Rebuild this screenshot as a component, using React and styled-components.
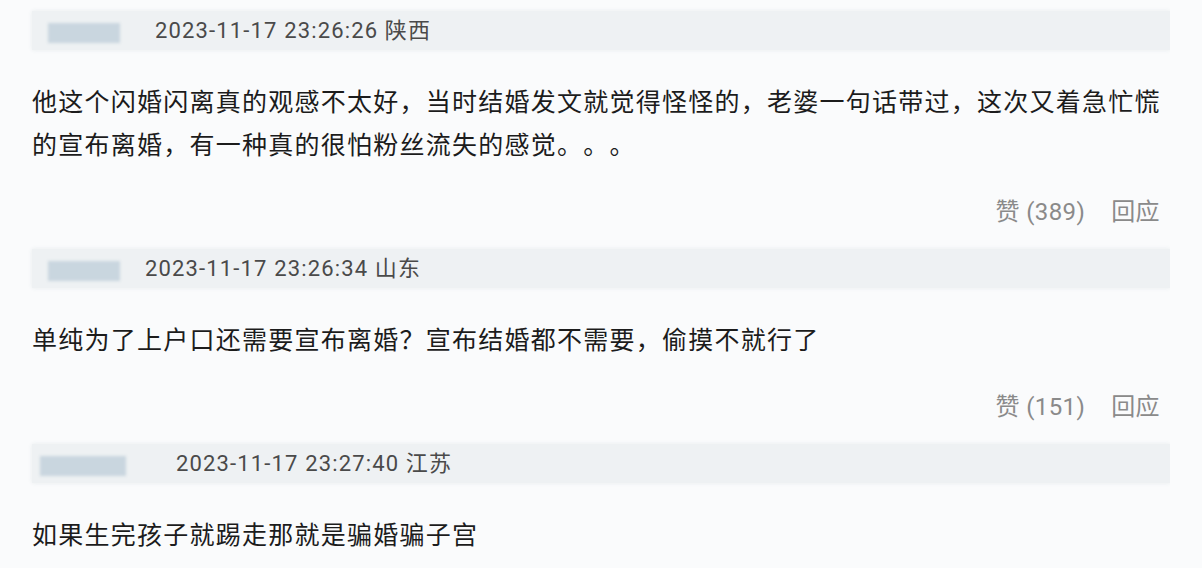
import React from 'react';
import styled, { createGlobalStyle } from 'styled-components';

const GlobalStyle = createGlobalStyle`
  html, body {
    margin: 0;
    padding: 0;
    background: #fafbfc;
  }
  body {
    font-family: Roboto, "Noto Sans CJK SC", sans-serif;
  }
`;

const comments = [
  {
    nameWidth: 123,
    blur: { left: 16, width: 72 },
    time: '2023-11-17 23:26:26',
    place: '陕西',
    text: '他这个闪婚闪离真的观感不太好，当时结婚发文就觉得怪怪的，老婆一句话带过，这次又着急忙慌的宣布离婚，有一种真的很怕粉丝流失的感觉。。。',
    likes: 389,
  },
  {
    nameWidth: 113,
    blur: { left: 16, width: 72 },
    time: '2023-11-17 23:26:34',
    place: '山东',
    text: '单纯为了上户口还需要宣布离婚？宣布结婚都不需要，偷摸不就行了',
    likes: 151,
  },
  {
    nameWidth: 144,
    blur: { left: 8, width: 86 },
    time: '2023-11-17 23:27:40',
    place: '江苏',
    text: '如果生完孩子就踢走那就是骗婚骗子宫',
  },
];

function Comment({ item }) {
  return (
    <Item>
      <Header>
        <Name $w={item.nameWidth}>
          <Blur $left={item.blur.left} $w={item.blur.width} />
        </Name>
        <Meta>
          {item.time} {item.place}
        </Meta>
      </Header>
      <Body>{item.text}</Body>
      {item.likes != null && (
        <Footer>
          <Action>赞 ({item.likes})</Action>
          <Action>回应</Action>
        </Footer>
      )}
    </Item>
  );
}

export default function App() {
  return (
    <Page>
      <GlobalStyle />
      {comments.map((c) => (
        <Comment key={c.time} item={c} />
      ))}
    </Page>
  );
}

const Page = styled.div`
  padding: 11px 0 0 32px;
  width: 1170px;
  height: 568px;
  box-sizing: border-box;
  overflow: hidden;
`;

const Item = styled.div`
  display: flex;
  flex-direction: column;
`;

const Header = styled.div`
  display: flex;
  align-items: center;
  width: 1138px;
  height: 39px;
  background: #eef1f3;
  box-shadow: 0 0 4px rgba(220, 226, 230, 0.6);
`;

const Name = styled.div`
  flex: none;
  position: relative;
  width: ${(p) => p.$w}px;
  height: 100%;
`;

const Blur = styled.span`
  position: absolute;
  left: ${(p) => p.$left}px;
  top: 12px;
  width: ${(p) => p.$w}px;
  height: 20px;
  background: #c9d6df;
  filter: blur(1.5px);
`;

const Meta = styled.span`
  font-family: Roboto, "Noto Sans CJK SC", sans-serif;
  font-size: 22px;
  letter-spacing: 1.15px;
  color: #4a4a4a;
  line-height: 39px;
`;

const Body = styled.p`
  margin: 29px 0 0;
  width: 1140px;
  font-family: "Noto Sans CJK SC", sans-serif;
  font-size: 25px;
  letter-spacing: 1.25px;
  line-height: 43px;
  color: #1c1c1c;
  text-spacing-trim: space-all;
`;

const Footer = styled.div`
  display: flex;
  justify-content: flex-end;
  gap: 26px;
  width: 1128px;
  margin: 32px 0 22px;
  line-height: 30px;
`;

const Action = styled.span`
  font-family: Roboto, "Noto Sans CJK SC", sans-serif;
  font-size: 24px;
  letter-spacing: 0.4px;
  color: #8a8a8a;
`;
